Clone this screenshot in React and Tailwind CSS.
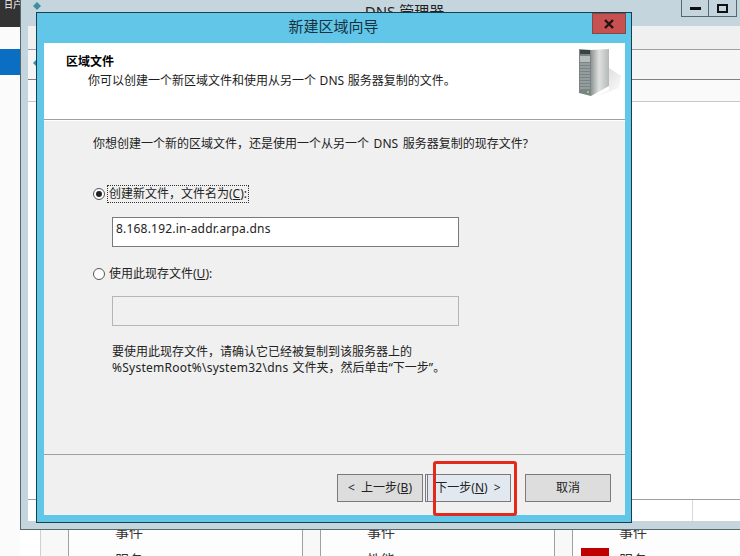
const font = "font-['Noto_Sans','Noto_Sans_CJK_SC',sans-serif]"

function ServerIcon() {
  return (
    <svg width="46" height="50" viewBox="0 0 46 50" className="shrink-0">
      <defs>
        <linearGradient id="side" x1="0" x2="1" y1="0" y2="0">
          <stop offset="0" stopColor="#8f9595" />
          <stop offset="0.45" stopColor="#dfe1df" />
          <stop offset="1" stopColor="#b4b8b8" />
        </linearGradient>
        <linearGradient id="shadow" x1="0" x2="1" y1="0" y2="1">
          <stop offset="0" stopColor="#d4d4d4" />
          <stop offset="1" stopColor="#ffffff" />
        </linearGradient>
      </defs>
      <polygon points="30,42 30,20 42,28 40,40 18,48" fill="url(#shadow)" />
      <polygon points="12,2 30,1 30,38 12,48" fill="url(#side)" />
      <polygon points="0,1 12,2 12,48 0,45" fill="#7b8484" />
      <rect x="1" y="2" width="10" height="4" fill="#3a4242" />
      <rect x="1" y="8" width="10" height="6" fill="#b7bdbd" />
      <path d="M1 16h10M1 19h10M1 22h10M1 25h10M1 28h10M1 31h10M1 34h10M1 37h10M1 40h10" stroke="#aeb5b5" strokeWidth="1" />
      <rect x="8" y="43" width="2" height="2" fill="#8fd070" />
    </svg>
  )
}

function Radio({ checked }) {
  return (
    <span className="w-[12px] h-[12px] rounded-full border border-[#555] bg-white flex items-center justify-center shrink-0">
      {checked && <span className="w-[6px] h-[6px] rounded-full bg-[#222]" />}
    </span>
  )
}

function WizardButton({ children, className = '' }) {
  return (
    <div className={`w-[86px] h-[28px] border border-[#7a7a7a] text-[12px] text-[#222] [word-spacing:3px] flex items-center justify-center ${className}`}>
      {children}
    </div>
  )
}

function Dialog() {
  return (
    <div className="absolute z-20 left-[36px] top-[12px] w-[596px] h-[511px] border border-[#16404f] bg-[#62c6e8] flex flex-col pl-[7px] pr-[6px] pb-[7px]">
      <div className="h-[30px] shrink-0 flex items-center justify-center text-[15px] text-[#17323e] relative pb-[4px] pr-[2px]">
        新建区域向导
        <div className="absolute right-[-1px] top-0 w-[34px] h-[21px] bg-[#c75050] border border-[#7f4a4a] flex items-center justify-center">
          <svg width="12" height="10" viewBox="0 0 12 10">
            <path d="M2 1l8 8M10 1l-8 8" stroke="#241414" strokeWidth="2.4" />
          </svg>
        </div>
      </div>

      <div className="flex-1 flex flex-col bg-[#f0f0f0]">
        <div className="h-[77px] shrink-0 bg-white flex justify-between pl-[22px] pt-[10px] border-b border-[#a0a0a0]">
          <div className="text-[12px] text-[#1c1c1c]">
            <div className="font-bold leading-[17px] text-black">区域文件</div>
            <div className="pl-[22px] leading-[21px] [word-spacing:0.5px]">你可以创建一个新区域文件和使用从另一个 DNS 服务器复制的文件。</div>
          </div>
          <div className="-mt-[5px]"><ServerIcon /></div>
        </div>

        <div className="flex-1 flex flex-col border-t border-white pl-[49px] text-[12px] text-[#222]">
          <div className="mt-[14px] leading-[18px] [word-spacing:1.5px]">你想创建一个新的区域文件，还是使用一个从另一个 DNS 服务器复制的现存文件?</div>

          <div className="mt-[32px] flex items-center gap-[3px] h-[18px]">
            <Radio checked />
            <span className="outline-1 outline-dotted outline-[#333] leading-[16px] px-px">创建新文件，文件名为(<u>C</u>):</span>
          </div>
          <div className="mt-[14px] ml-[19px] w-[347px] h-[30px] border border-[#7a7a7a] bg-white flex items-center pl-[3px] pb-[6px] text-[12px] tracking-[0.2px]">
            8.168.192.in-addr.arpa.dns
          </div>

          <div className="mt-[18px] flex items-center gap-[3px] h-[18px]">
            <Radio />
            <span className="px-px">使用此现存文件(<u>U</u>):</span>
          </div>
          <div className="mt-[13px] ml-[19px] w-[347px] h-[30px] border border-[#b5b5b5] bg-[#f0f0f0]" />

          <div className="mt-[18px] ml-[19px] leading-[16px]">
            <div>要使用此现存文件，请确认它已经被复制到该服务器上的</div>
            <div><span className="tracking-[0.25px]">%SystemRoot%\system32\dns</span> <span className="ml-[1px]">文件夹，然后单击“下一步”。</span></div>
          </div>
        </div>

        <div className="h-[61px] shrink-0 border-t border-[#a0a0a0] flex justify-end items-start pt-[19px] pr-[14px]">
          <WizardButton className="bg-[#dddddd]">&lt; 上一步(<u>B</u>)</WizardButton>
          <WizardButton className="ml-[2px] bg-[#e1e8f0] shadow-[inset_1px_0_0_#f0f0f0,inset_2px_0_0_#7a7a7a]">下一步(<u>N</u>) &gt;</WizardButton>
          <WizardButton className="ml-[14px] bg-[#dddddd]">取消</WizardButton>
        </div>
      </div>
    </div>
  )
}

function Card({ title, second, badge }) {
  return (
    <div className="w-[235px] shrink-0 h-full border-x border-[#a0a0a0] bg-[#fdfdfd] relative">
      <div className="-mt-[12px] pl-[46px] flex flex-col items-start text-[14px] text-[#333] leading-[28px]">
        <span>{title}</span>
        <span>{second}</span>
      </div>
      {badge && <span className="absolute left-[8px] top-[18px] w-[28px] h-[24px] bg-[#c00000] text-white text-[13px] text-center leading-[24px]">8</span>}
    </div>
  )
}

export default function App() {
  return (
    <div className={`relative w-[740px] h-[556px] overflow-hidden bg-white ${font}`}>
      <div className="flex h-[556px]">
        {/* left edge of the server manager */}
        <div className="w-[20px] shrink-0 bg-[#fbfbfb] flex flex-col">
          <div className="h-[27px] bg-[#333333] text-white text-[9px] leading-[10px] pl-[4px] whitespace-nowrap overflow-hidden">日户</div>
          <div className="h-[22px]" />
          <div className="h-[26px] bg-[#0a6fc2]" />
        </div>

        <div className="flex-1 min-w-0 flex flex-col overflow-hidden">
          {/* DNS manager window behind the dialog */}
          <div className="h-[530px] shrink-0 bg-white border-l border-b border-[#56686f] flex flex-col relative z-10">
            <div className="h-[26px] shrink-0 bg-[#c5d5dd] flex justify-center relative text-[15px] text-[#222] pt-[2px]">
              <span className="ml-[48px] leading-[18px]">DNS 管理器</span>
              <svg width="10" height="10" viewBox="0 0 10 10" className="absolute left-[11px] top-[2px]">
                <path d="M5 0l4 4-4 4-4-4z" fill="#3d8f9a" />
              </svg>
              <div className="absolute left-[660px] top-0 h-[17px] flex border-x border-b border-[#56686f] bg-[#c5d5dd]">
                <div className="w-[27px] flex items-center justify-center border-r border-[#56686f]">
                  <span className="w-[11px] h-[3px] bg-[#111]" />
                </div>
                <div className="w-[27px] flex items-center justify-center">
                  <span className="w-[11px] h-[9px] border-2 border-[#111]" />
                </div>
              </div>
            </div>
            <div className="flex-1 flex flex-col border-l-[7px] border-[#c5d5dd] relative">
              <svg width="6" height="8" viewBox="0 0 6 8" className="absolute left-[5px] top-[33px]">
                <path d="M4 0v8L0 4z" fill="#3d8f9a" />
              </svg>
              <div className="h-[24px] shrink-0 bg-[#f0f0f0] border-b border-[#a0a0a0]" />
              <div className="h-[30px] shrink-0 bg-[#f5f5f5] border-b border-[#808080]" />
              <div className="h-[22px] shrink-0 bg-[#fafafa] border-b border-[#c8c8c8]" />
              <div className="flex-1 bg-white" />
              <div className="h-[22px] shrink-0 border-t border-[#a0a0a0] flex justify-end">
                <div className="w-[48px] border-l border-[#d8d8d8]" />
              </div>
            </div>
            <div className="h-[8px] shrink-0 bg-[#c5d5dd]" />
          </div>

          {/* dashboard cards peeking out below */}
          <div className="flex-1 flex ml-[20px] pl-[27px] gap-[17px] bg-[#f8f8f8] border-l border-[#d0d0d0]">
            <Card title="事件" second="服务" />
            <Card title="事件" second="性能" />
            <Card title="事件" second="服务" badge />
          </div>
        </div>
      </div>

      <Dialog />

      {/* red annotation round the next button */}
      <div className="absolute z-30 left-[433px] top-[461px] w-[84px] h-[55px] border-[3px] border-[#e2291c] rounded-[3px]" />
    </div>
  )
}
